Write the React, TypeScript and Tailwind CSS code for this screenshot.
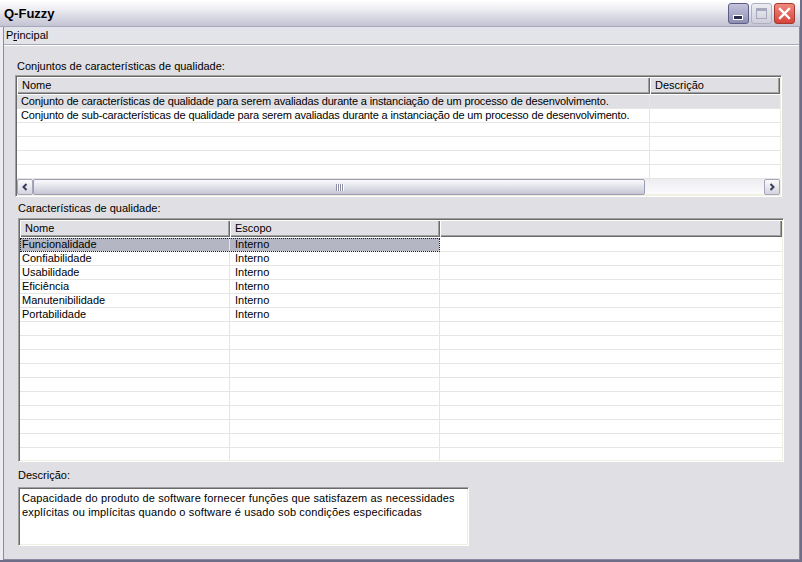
import React from "react";

const F = { fontFamily: '"Liberation Sans", Arial, sans-serif' } as const;

const hdr =
  "h-[17px] bg-[#e0dfe3] shadow-[inset_1px_1px_0_#ffffff,inset_-1px_-1px_0_#696969,inset_-2px_-2px_0_#a0a0a0] pl-[5px] text-[11px] leading-[16px] text-black whitespace-nowrap overflow-hidden";

function TitleBar() {
  return (
    <div className="h-[27px] flex items-center bg-[linear-gradient(to_bottom,#ffffff_0%,#f1f1f5_30%,#dcdce6_60%,#c3c3d3_100%)] border-b border-[#a8a8bc]">
      <div className="pl-[4px] pt-[1px] text-[13px] font-bold text-black flex-1 leading-[16px]" style={F}>
        Q-Fuzzy
      </div>
      <div className="flex items-center gap-[2px] pr-[5px] pt-[1px]">
        <div className="w-[21px] h-[21px] rounded-[3px] border border-[#5c5c84] bg-[linear-gradient(to_bottom,#c4c4dc,#8e8eb4)] relative">
          <div className="absolute left-[5px] top-[12px] w-[8px] h-[3px] bg-[#2c2c50] shadow-[0_0_0_1px_#ffffff]" />
        </div>
        <div className="w-[21px] h-[21px] rounded-[3px] border border-[#b0b0c4] bg-[linear-gradient(to_bottom,#ececf2,#cfcfdc)] relative">
          <div className="absolute left-[4px] top-[4px] w-[11px] h-[11px] border border-[#a8a8bc] border-t-[3px]" />
        </div>
        <div className="w-[21px] h-[21px] rounded-[3px] border border-[#a33a30] bg-[linear-gradient(to_bottom,#f08a7c,#d8423a)] relative flex items-center justify-center">
          <svg width="13" height="13" viewBox="0 0 13 13">
            <path d="M2 2 L11 11 M11 2 L2 11" stroke="#ffffff" strokeWidth="2.4" strokeLinecap="square" />
          </svg>
        </div>
      </div>
    </div>
  );
}

function Chevron({ dir }: { dir: "l" | "r" }) {
  return (
    <svg width="8" height="8" viewBox="0 0 8 8">
      <path
        d={dir === "l" ? "M5.5 1 L2.5 4 L5.5 7" : "M2.5 1 L5.5 4 L2.5 7"}
        stroke="#3c3c5c"
        strokeWidth="2"
        fill="none"
      />
    </svg>
  );
}

function HScroll() {
  return (
    <div className="h-[16px] flex bg-[linear-gradient(to_bottom,#ececf2,#fbfbfd)] border-b border-[#f1efe2]">
      <div className="w-[16px] h-[16px] rounded-[2px] border border-[#a6a6ba] bg-[linear-gradient(to_bottom,#fbfbfd,#d4d4e0)] flex items-center justify-center">
        <Chevron dir="l" />
      </div>
      <div className="w-[612px] h-[16px] rounded-[2px] border border-[#9c9cb2] bg-[linear-gradient(to_bottom,#fafafc,#dcdce6_60%,#c6c6d4)] flex items-center justify-center gap-[1px]">
        {[0, 1, 2, 3].map((i) => (
          <div key={i} className="w-[1px] h-[7px] bg-[#8c8ca4] shadow-[1px_0_0_#ffffff]" />
        ))}
      </div>
      <div className="flex-1" />
      <div className="w-[16px] h-[16px] rounded-[2px] border border-[#a6a6ba] bg-[linear-gradient(to_bottom,#fbfbfd,#d4d4e0)] flex items-center justify-center">
        <Chevron dir="r" />
      </div>
    </div>
  );
}

const sunken =
  "border-t border-l border-[#a0a0a0] border-r-white border-b-white shadow-[inset_1px_1px_0_#696969,inset_-1px_-1px_0_#f1efe2]";

function TopTable() {
  const rows = [
    "Conjunto de características de qualidade para serem avaliadas durante a instanciação de um processo de desenvolvimento.",
    "Conjunto de sub-características de qualidade para serem avaliadas durante a instanciação de um processo de desenvolvimento.",
    "",
    "",
    "",
    "",
  ];
  return (
    <div className={`w-[767px] bg-white border-r border-b ${sunken} p-[1px]`}>
      <div className="flex">
        <div className={`${hdr} w-[633px]`}>Nome</div>
        <div className={`${hdr} flex-1`}>Descrição</div>
      </div>
      <div className="h-[1px] bg-white" />
      {rows.map((r, i) => (
        <div
          key={i}
          className={`flex h-[14px] ${i === 0 ? "bg-[#e0dfe3]" : "bg-white"}`}
        >
          <div className="w-[633px] border-r border-b border-[#e6e5e2] pl-[4px] text-[11px] leading-[13px] tracking-[-0.16px] text-black whitespace-nowrap overflow-hidden">
            {r}
          </div>
          <div className="flex-1 border-b border-[#e6e5e2]" />
        </div>
      ))}
      <HScroll />
    </div>
  );
}

function BottomTable() {
  const rows: [string, string][] = [
    ["Funcionalidade", "Interno"],
    ["Confiabilidade", "Interno"],
    ["Usabilidade", "Interno"],
    ["Eficiência", "Interno"],
    ["Manutenibilidade", "Interno"],
    ["Portabilidade", "Interno"],
  ];
  const all: [string, string][] = [...rows];
  while (all.length < 16) all.push(["", ""]);
  return (
    <div className={`w-[766px] h-[244px] bg-white border-r border-b ${sunken} p-[1px] overflow-hidden`}>
      <div className="flex">
        <div className={`${hdr} w-[210px]`}>Nome</div>
        <div className={`${hdr} w-[210px]`}>Escopo</div>
        <div className={`${hdr} flex-1`} />
      </div>
      <div className="h-[1px] bg-white" />
      {all.map(([a, b], i) => (
        <div key={i} className="flex h-[14px]">
          <div
            className={`relative flex w-[420px] ${i === 0 ? "bg-[#b4b6c4]" : ""}`}
          >
            <div className="w-[210px] border-r border-b border-[#e6e5e2] pl-[2px] text-[11px] leading-[13px] text-black whitespace-nowrap overflow-hidden">
              {a}
            </div>
            <div className="w-[210px] border-r border-b border-[#e6e5e2] pl-[5px] text-[11px] leading-[13px] text-black whitespace-nowrap overflow-hidden">
              {b}
            </div>
            {i === 0 && (
              <div className="absolute inset-0 border border-dotted border-[#202020]" />
            )}
          </div>
          <div className="flex-1 border-b border-[#e6e5e2]" />
        </div>
      ))}
    </div>
  );
}

export default function App() {
  return (
    <div
      className="w-[802px] h-[562px] bg-[#e0dfe3] flex flex-col overflow-hidden border-r-2 border-b-2 border-[#6e6e88] text-black"
      style={F}
    >
      <TitleBar />
      <div className="flex-1 flex flex-col border-l-[3px] border-[#ececf2]">
        <div className="flex-1 flex flex-col border-l border-r border-b border-[#8a8aa2]">
          <div className="h-[17px] flex items-center bg-[#e3e3ea] pl-[2px] text-[11px]">
            <span>
              P<span className="underline">r</span>incipal
            </span>
          </div>
          <div className="h-[1px] bg-[#a8a8b8]" />
          <div className="h-[1px] bg-white" />
          <div className="pl-[11px] pt-[14px] flex flex-col">
            <div className="h-[15px] text-[11px] leading-[13px] pl-[2px]">
              Conjuntos de características de qualidade:
            </div>
            <TopTable />
            <div className="h-[21px] text-[11px] leading-[13px] pl-[3px] pt-[5px]">
              Características de qualidade:
            </div>
            <div className="pl-[3px]">
              <BottomTable />
            </div>
            <div className="h-[25px] text-[11px] leading-[13px] pl-[3px] pt-[7px]">
              Descrição:
            </div>
            <div className="pl-[3px]">
              <div className={`w-[451px] h-[59px] bg-white ${sunken} border-r border-b pl-[3px] pt-[3px] text-[11px] leading-[14px] tracking-[0.14px]`}>
                Capacidade do produto de software fornecer funções que satisfazem as necessidades
                <br />
                explícitas ou implícitas quando o software é usado sob condições especificadas
              </div>
            </div>
          </div>
        </div>
      </div>
    </div>
  );
}
